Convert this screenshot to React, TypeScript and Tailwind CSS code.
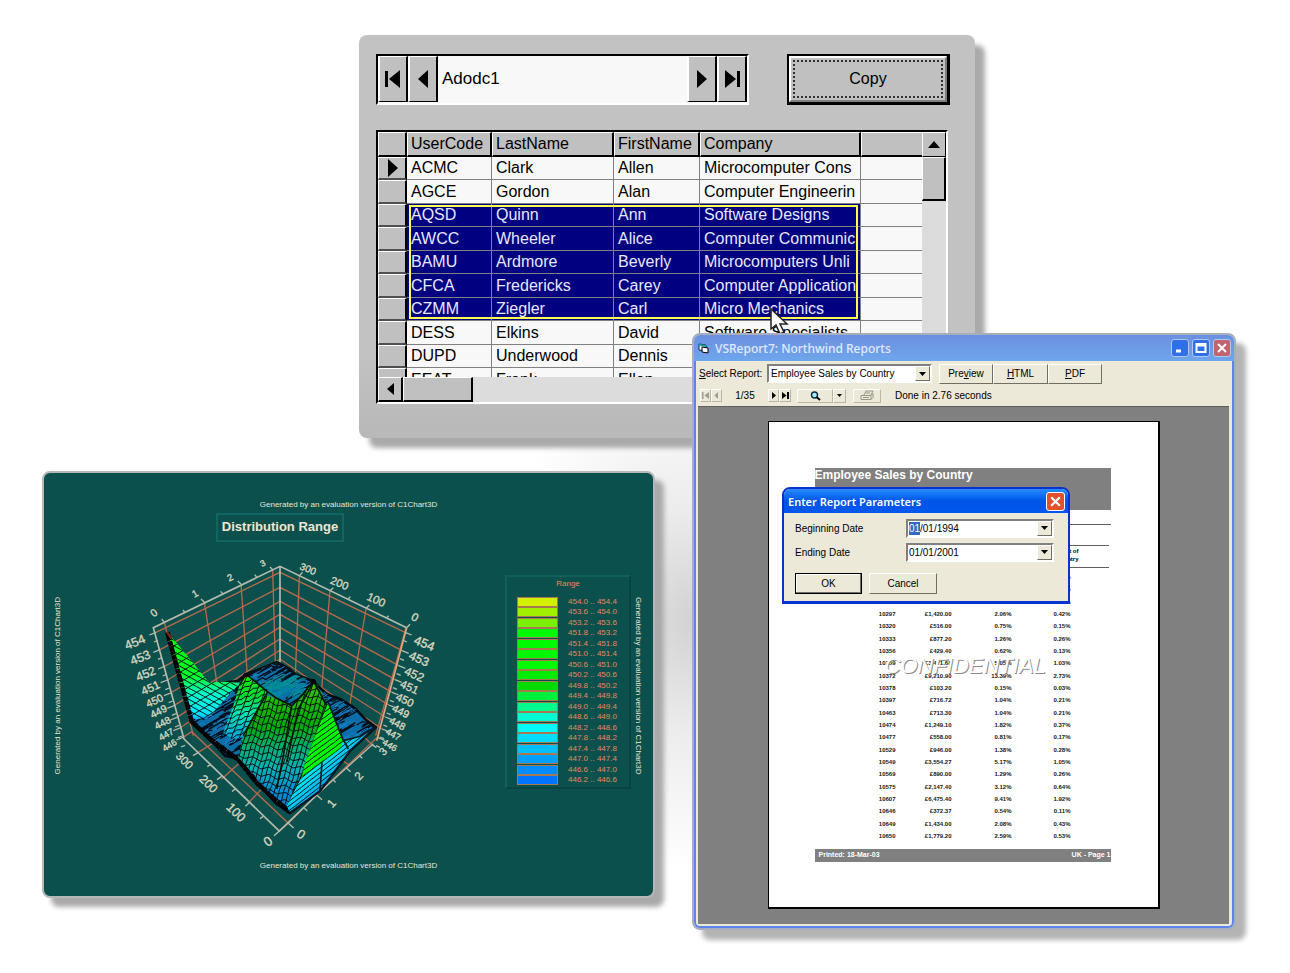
import type { ReactNode } from 'react'
import { useState } from 'react'

const RAISED = 'bg-[#c0c0c0] border border-t-white border-l-white border-r-black border-b-black'
const XP_BUTTON =
  'bg-[#ece9d8] border border-t-white border-l-white border-r-[#716f64] border-b-[#716f64]'
const GENERATED = 'Generated by an evaluation version of C1Chart3D'

const CUSTOMERS = [
  ['ACMC', 'Clark', 'Allen', 'Microcomputer Cons'],
  ['AGCE', 'Gordon', 'Alan', 'Computer Engineerin'],
  ['AQSD', 'Quinn', 'Ann', 'Software Designs'],
  ['AWCC', 'Wheeler', 'Alice', 'Computer Communic'],
  ['BAMU', 'Ardmore', 'Beverly', 'Microcomputers Unli'],
  ['CFCA', 'Fredericks', 'Carey', 'Computer Application'],
  ['CZMM', 'Ziegler', 'Carl', 'Micro Mechanics'],
  ['DESS', 'Elkins', 'David', 'Software Specialists'],
  ['DUPD', 'Underwood', 'Dennis', ''],
  ['EEAT', 'Frank', 'Ellen', ''],
]

const LEGEND = [
  ['#d2f000', '454.0', '454.4'],
  ['#a0f000', '453.6', '454.0'],
  ['#78f000', '453.2', '453.6'],
  ['#00fa00', '451.8', '453.2'],
  ['#00fa00', '451.4', '451.8'],
  ['#00f500', '451.0', '451.4'],
  ['#00fa00', '450.6', '451.0'],
  ['#00eb00', '450.2', '450.6'],
  ['#00dc00', '449.8', '450.2'],
  ['#00f03c', '449.4', '449.8'],
  ['#00fa8c', '449.0', '449.4'],
  ['#00fad2', '448.6', '449.0'],
  ['#00fafa', '448.2', '448.6'],
  ['#00dcff', '447.8', '448.2'],
  ['#00beff', '447.4', '447.8'],
  ['#00a0ff', '447.0', '447.4'],
  ['#008cff', '446.6', '447.0'],
  ['#0073ff', '446.2', '446.6'],
]

const SALES = [
  ['', '', '', '%'],
  ['', '', '', '%'],
  ['', '', '', '%'],
  ['10297', '£1,420.00', '2.06%', '0.42%'],
  ['10320', '£516.00', '0.75%', '0.15%'],
  ['10333', '£877.20', '1.26%', '0.26%'],
  ['10356', '£429.40', '0.62%', '0.13%'],
  ['10359', '£3,471.68', '5.05%', '1.03%'],
  ['10372', '£9,210.90', '13.39%', '2.73%'],
  ['10378', '£103.20', '0.15%', '0.03%'],
  ['10397', '£716.72', '1.04%', '0.21%'],
  ['10463', '£713.30', '1.04%', '0.21%'],
  ['10474', '£1,249.10', '1.82%', '0.37%'],
  ['10477', '£558.00', '0.81%', '0.17%'],
  ['10529', '£946.00', '1.38%', '0.28%'],
  ['10549', '£3,554.27', '5.17%', '1.05%'],
  ['10569', '£890.00', '1.29%', '0.26%'],
  ['10575', '£2,147.40', '3.12%', '0.64%'],
  ['10607', '£6,475.40', '9.41%', '1.92%'],
  ['10646', '£372.37', '0.54%', '0.11%'],
  ['10649', '£1,434.00', '2.08%', '0.43%'],
  ['10650', '£1,779.20', '2.59%', '0.53%'],
]

function Arrow({ dir, bar }: { dir: 'left' | 'right'; bar?: boolean }) {
  return (
    <svg viewBox="0 0 20 20" className="h-5 w-5" aria-hidden="true">
      {dir === 'left' ? (
        <>
          {bar && <rect x="2" y="2" width="3" height="16" />}
          <path d={bar ? 'M17 1v18L6 10z' : 'M15 1v18L5 10z'} />
        </>
      ) : (
        <>
          {bar && <rect x="15" y="2" width="3" height="16" />}
          <path d={bar ? 'M3 1v18l11-9z' : 'M5 1v18l10-9z'} />
        </>
      )}
    </svg>
  )
}

function NavButton({ label, dir, bar }: { label: string; dir: 'left' | 'right'; bar?: boolean }) {
  return (
    <button
      aria-label={label}
      className="flex w-[30px] items-center justify-center border-t border-r-2 border-b border-l-2 border-t-white border-l-white border-r-black border-b-black bg-[#c0c0c0]"
    >
      <Arrow dir={dir} bar={bar} />
    </button>
  )
}

function DataGrid() {
  return (
    <div className="relative mt-[25px] h-[274px] w-[572px] border-2 border-t-black border-l-black border-r-white border-b-white">
      <div className="flex h-[245px]">
        <div className="relative h-full w-[544px] overflow-hidden bg-[#f8f8f8]">
          <table className="w-[544px] table-fixed border-separate border-spacing-0 text-left text-[16px] leading-[20px]">
            <colgroup>
              <col className="w-[29px]" />
              <col className="w-[85px]" />
              <col className="w-[122px]" />
              <col className="w-[86px]" />
              <col className="w-[161px]" />
              <col className="w-[61px]" />
            </colgroup>
            <thead>
              <tr className="h-[25px]">
                {['', 'UserCode', 'LastName', 'FirstName', 'Company', ''].map((name, i) => (
                  <th
                    key={i}
                    className="overflow-hidden border-t border-r-2 border-b-2 border-l border-t-white border-l-white border-r-black border-b-black bg-[#c0c0c0] pl-[3px] font-normal whitespace-nowrap last:border-r-0"
                  >
                    {name}
                  </th>
                ))}
              </tr>
            </thead>
            <tbody>
              {CUSTOMERS.map((row, i) => (
                <tr
                  key={row[0]}
                  className={`odd:h-[23px] even:h-[24px] ${
                    i > 1 && i < 7 ? 'bg-[#000080] text-[#e8e8ff]' : 'text-black'
                  }`}
                >
                  <td className="border-t border-r-2 border-b-2 border-l border-t-white border-l-white border-r-black border-b-[#505050] bg-[#c0c0c0] p-0">
                    {i === 0 && (
                      <svg viewBox="0 0 10 18" className="ml-[9px] h-[18px] w-[10px]" aria-hidden="true">
                        <path d="M0 0v18l10-9z" />
                      </svg>
                    )}
                  </td>
                  {row.map((cell, j) => (
                    <td
                      key={j}
                      className="overflow-hidden border-r border-b border-[#808080] py-0 pl-[4px] whitespace-nowrap"
                    >
                      {cell}
                    </td>
                  ))}
                  <td className="border-b border-[#808080] bg-[#f8f8f8] p-0" />
                </tr>
              ))}
            </tbody>
          </table>
          <div className="absolute top-[73px] left-[31px] h-[114px] w-[449px] border-2 border-[#ffff50]" />
        </div>
        <div className="flex w-[24px] flex-col bg-[#dcdcdc]">
          <button aria-label="Scroll up" className={`flex h-[25px] items-center justify-center ${RAISED}`}>
            <svg viewBox="0 0 12 7" className="h-[7px] w-[12px]" aria-hidden="true">
              <path d="M0 7h12L6 0z" />
            </svg>
          </button>
          <div className="h-[44px] border-t border-r-2 border-b-2 border-l border-t-white border-l-white border-r-black border-b-black bg-[#c0c0c0]" />
        </div>
      </div>
      <div className="flex h-[25px] bg-[#dcdcdc]">
        <button
          aria-label="Scroll left"
          className="flex w-[25px] items-center justify-center border-t border-r-2 border-b-2 border-l border-t-white border-l-white border-r-black border-b-black bg-[#c0c0c0]"
        >
          <svg viewBox="0 0 7 12" className="h-[12px] w-[7px]" aria-hidden="true">
            <path d="M7 0v12L0 6z" />
          </svg>
        </button>
        <div className="w-[70px] border-t border-r-2 border-b-2 border-l border-t-white border-l-white border-r-black border-b-black bg-[#c0c0c0]" />
      </div>
    </div>
  )
}

function CustomerWindow() {
  return (
    <section className="absolute top-[35px] left-[359px] h-[403px] w-[616px] rounded-lg bg-linear-to-b from-[#c2c2c2] from-80% to-[#b8b8b8] px-[17px] pt-[19px] shadow-[10px_10px_5px_#aaaaaa]">
      <div className="flex w-[574px] justify-between">
        <div className="flex h-[51px] w-[373px] border-2 border-t-black border-l-black border-r-white border-b-white bg-[#f8f8f8] pb-px">
          <div className="flex flex-1">
            <NavButton label="First record" dir="left" bar />
            <NavButton label="Previous record" dir="left" />
            <input
              aria-label="Record source"
              defaultValue="Adodc1"
              className="min-w-0 flex-1 bg-[#f8f8f8] px-[4px] text-[17px] leading-[20px] outline-none"
            />
            <NavButton label="Next record" dir="right" />
            <NavButton label="Last record" dir="right" bar />
          </div>
        </div>
        <button className="flex h-[51px] w-[163px] border-2 border-r-3 border-b-3 border-black bg-[#c0c0c0]">
          <span className="flex h-full w-full border-2 border-t-white border-l-white border-r-[#808080] border-b-[#808080] p-[2px]">
            <span className="flex flex-1 items-center justify-center border-2 border-dotted border-[#303030] text-[16px] leading-[20px]">
              Copy
            </span>
          </span>
        </button>
      </div>
      <DataGrid />
      <svg viewBox="0 0 20 28" className="absolute top-[273px] left-[411px] h-[28px] w-[20px]" aria-hidden="true">
        <path d="M1 1v20l5-4 4 9 4-2-4-8h7z" fill="#fff" stroke="#222" strokeWidth="1.5" />
      </svg>
    </section>
  )
}

// cheap deterministic noise, so the surface looks the same on every render
function noise(n: number) {
  const v = Math.sin(n * 127.1) * 43758.5453
  return v - Math.floor(v)
}

function Hatch({ clip, count, box, dx, dy, color, width }: {
  clip: string
  count: number
  box: [number, number, number, number]
  dx: number
  dy: number
  color: string
  width: number
}) {
  let d = ''
  for (let i = 0; i < count; i++) {
    const x = box[0] + noise(i + count) * box[2]
    const y = box[1] + noise(i * 3 + 7) * box[3]
    const k = 0.5 + noise(i + 31)
    d += `M${Math.round(x)} ${Math.round(y)}l${Math.round(dx * k)} ${Math.round(dy * k)}l${Math.round(dx * 0.3)} ${Math.round(noise(i) * 14 - 7)}`
  }
  return <path d={d} clipPath={`url(#${clip})`} fill="none" stroke={color} strokeWidth={width} />
}

function Mesh({ clip, box, dx, dy, step, wave = 0 }: {
  clip: string
  box: [number, number, number, number]
  dx: number
  dy: number
  step: number
  wave?: number
}) {
  const [x, y, w, h] = box
  const steep = Math.abs(dy) > Math.abs(dx)
  let d = ''
  for (let s = -300; s < (steep ? w : h) + 300; s += step) {
    d += steep ? `M${x + s} ${y}` : `M${x} ${y + s}`
    const parts = 12
    for (let p = 1; p <= parts; p++) {
      const jig = wave * (p % 2 ? 1 : -1)
      const len = steep ? h / dy : w / dx
      const px = (steep ? x + s : x) + (dx * len * p) / parts
      const py = (steep ? y : y + s) + (dy * len * p) / parts
      d += `L${Math.round(px + (steep ? jig : 0))} ${Math.round(py + (steep ? 0 : jig))}`
    }
  }
  return <path d={d} clipPath={`url(#${clip})`} fill="none" stroke="#001418" strokeWidth="3" />
}

const FACETS = {
  base: 'M240 515L262 470L300 405L385 396L408 376L470 352L500 340L530 355L560 378L608 395L650 436L690 450L735 478L770 515L797 535L720 605L630 725L540 792L500 765L440 700L385 630L345 620L300 570z',
  spike: 'M172 250L190 270L240 330L296 400L345 398L390 402L345 450L300 500L245 517L222 450L198 350z',
  hill: 'M408 375L440 400L472 428L440 480L400 565L365 570L340 550L370 470L388 410z',
  ridge: 'M470 440L500 448L545 470L575 440L610 395L635 432L650 470L600 600L575 680L530 770L480 730L385 625L400 560L440 480z',
  crest: 'M655 460L675 510L700 572L690 600L575 684L585 640L615 560z',
  slope: 'M575 684L700 572L750 560L795 535L720 605L630 725L540 790L530 770z',
}

const LEFT_AXIS = [[138, 250], [150, 302], [164, 352], [172, 393], [182, 432], [192, 470], [201, 505], [210, 537], [219, 565]]
const BACK_AXIS = [70, 115, 157, 196, 235, 270, 303, 330]
const RIGHT_AXIS = [[885, 250], [876, 305], [866, 350], [855, 392], [846, 430], [836, 468], [826, 504], [816, 540], [804, 566]]

const AXIS_LABELS: [string, number, number, number, number][] = [
  ['454', 76, 292, -22, 38], ['453', 92, 338, -22, 37], ['452', 108, 386, -22, 36],
  ['451', 122, 428, -24, 34], ['450', 134, 466, -25, 32], ['449', 146, 498, -27, 31],
  ['448', 158, 532, -28, 30], ['447', 168, 566, -30, 28], ['446', 178, 598, -32, 27],
  ['454', 942, 296, 22, 38], ['453', 926, 342, 24, 37], ['452', 912, 388, 24, 36],
  ['451', 898, 426, 24, 34], ['450', 884, 464, 25, 33], ['449', 872, 498, 26, 32],
  ['448', 862, 534, 28, 30], ['447', 850, 566, 28, 28], ['446', 840, 598, 30, 27],
  ['0', 132, 202, -35, 32], ['1', 255, 144, -30, 30], ['2', 360, 96, -28, 29], ['3', 458, 52, -28, 26],
  ['300', 594, 70, 22, 30], ['200', 688, 114, 22, 33], ['100', 798, 164, 24, 34], ['0', 914, 216, 30, 34],
  ['300', 222, 646, 44, 34], ['200', 294, 716, 44, 36], ['100', 376, 802, 45, 38], ['0', 476, 890, -35, 40],
  ['0', 572, 868, 35, 38], ['1', 666, 774, -48, 36], ['2', 748, 692, -48, 35], ['3', 820, 618, -48, 33],
]

function SurfaceChart() {
  return (
    <svg viewBox="0 0 1020 930" className="mt-[7px] h-[310px] w-[340px]" role="img" aria-label="Distribution Range">
      <defs>
        {Object.entries(FACETS).map(([name, d]) => (
          <clipPath key={name} id={name}>
            <path d={d} />
          </clipPath>
        ))}
        <linearGradient id="spikeFill" x1="0" x2="0" y1="250" y2="520" gradientUnits="userSpaceOnUse">
          <stop offset="0" stopColor="#00ff00" />
          <stop offset=".48" stopColor="#00ff28" />
          <stop offset=".68" stopColor="#00fac8" />
          <stop offset=".9" stopColor="#00e6ff" />
          <stop offset="1" stopColor="#008cf0" />
        </linearGradient>
        <linearGradient id="hillFill" x1="0" x2="0" y1="375" y2="570" gradientUnits="userSpaceOnUse">
          <stop offset="0" stopColor="#14f000" />
          <stop offset=".35" stopColor="#00dc32" />
          <stop offset=".6" stopColor="#00e6b4" />
          <stop offset="1" stopColor="#00a0dc" />
        </linearGradient>
        <linearGradient id="ridgeFill" x1="0" x2="0" y1="390" y2="780" gradientUnits="userSpaceOnUse">
          <stop offset="0" stopColor="#3cc800" />
          <stop offset=".35" stopColor="#00aa00" />
          <stop offset=".52" stopColor="#00af6e" />
          <stop offset=".68" stopColor="#00b4b4" />
          <stop offset=".85" stopColor="#0090d2" />
          <stop offset="1" stopColor="#0078d7" />
        </linearGradient>
        <linearGradient id="slopeFill" x1="600" x2="690" y1="610" y2="700" gradientUnits="userSpaceOnUse">
          <stop offset="0" stopColor="#00f078" />
          <stop offset=".3" stopColor="#00ebf0" />
          <stop offset=".65" stopColor="#00bef5" />
          <stop offset="1" stopColor="#0078ff" />
        </linearGradient>
      </defs>

      <g stroke="#b56a4c" strokeWidth="4" fill="none">
        {BACK_AXIS.map((y, i) => (
          <path key={y} d={`M${LEFT_AXIS[i][0]} ${LEFT_AXIS[i][1]}L510 ${y}L${RIGHT_AXIS[i][0]} ${RIGHT_AXIS[i][1]}`} />
        ))}
        <path d="M163 220L250 560M283 160L322 410M393 105L412 380M488 60L496 345M568 80L556 380M660 125L635 420M768 180L717 480M888 236L797 560" />
        <path d="M219 565L245 548L535 823L508 846M265 610L305 585M335 690L385 645M412 765L460 715M535 823L620 738L800 566M720 650L690 630M785 585L740 545" />
      </g>
      <g stroke="#b4bcae" strokeWidth="5" fill="none">
        <path d="M222 570L130 236L510 52L890 236M510 52V340M222 570L508 846L620 738" />
        <path d="M890 236L800 575" stroke="#dca882" />
        <path d="M630 728L790 584" strokeWidth="4" />
        {LEFT_AXIS.map(([x, y]) => <path key={y} strokeWidth="4" d={`M${x} ${y}l-20 8M${x + 6} ${y + 24}l-12 5`} />)}
        {RIGHT_AXIS.map(([x, y]) => <path key={y} strokeWidth="4" d={`M${x} ${y}l20 8M${x - 6} ${y + 24}l12 5`} />)}
        <path
          strokeWidth="4"
          d="M163 220l-8-10M225 190l-6-7M283 160l-10-10M338 134l-6-7M393 105l-10-9M440 84l-6-7M488 62l-8-8M568 80l10-10M615 102l6-7M660 125l10-9M715 150l6-7M768 178l10-9M830 206l6-6M890 236l10-10"
        />
        <path
          strokeWidth="4"
          d="M265 610l-16 10M302 646l-10 7M335 682l-14 10M376 720l-10 7M420 760l-14 12M460 802l-10 7M508 846l-16 14M535 823l16 14M583 778l9 8M620 738l16 14M668 692l9 8M708 656l14 12M748 620l9 8M785 586l14 10"
        />
      </g>

      <path d={FACETS.base} fill="#0c6ea8" stroke="#000c12" strokeWidth="8" strokeLinejoin="round" />
      <Hatch clip="base" count={620} box={[200, 340, 600, 460]} dx={34} dy={-20} color="#000f1c" width={4} />
      <Hatch clip="base" count={160} box={[230, 350, 560, 300]} dx={26} dy={-16} color="#1482c8" width={3} />
      <Hatch clip="base" count={50} box={[440, 395, 110, 60]} dx={26} dy={-14} color="#008c96" width={4} />
      <Hatch clip="base" count={45} box={[340, 480, 130, 130]} dx={20} dy={-30} color="#0a8cd2" width={3} />

      <path d={FACETS.spike} fill="url(#spikeFill)" />
      <Mesh clip="spike" box={[160, 250, 240, 270]} dx={40} dy={22} step={17} />
      <Mesh clip="spike" box={[160, 250, 240, 270]} dx={20} dy={-12} step={30} />
      <path d="M172 250L245 517L300 570L385 632L440 702L540 790" fill="none" stroke="#000" strokeWidth="14" strokeDasharray="26 2 14 1" />
      <path d="M170 248l14 20" stroke="#7d2814" strokeWidth="7" />

      <path d={FACETS.hill} fill="url(#hillFill)" />
      <Mesh clip="hill" box={[330, 370, 150, 200]} dx={30} dy={-12} step={15} wave={2} />
      <Mesh clip="hill" box={[330, 370, 150, 200]} dx={-9} dy={24} step={24} />

      <path d={FACETS.ridge} fill="url(#ridgeFill)" />
      <Mesh clip="ridge" box={[380, 390, 290, 400]} dx={-8} dy={26} step={14} wave={1} />
      <Mesh clip="ridge" box={[380, 390, 290, 400]} dx={40} dy={8} step={22} wave={5} />
      <path
        d="M388 410L408 375L472 428L500 448L545 470L575 440L610 395L650 470M472 430L400 560M545 470L520 620L500 720M610 400L565 480L530 640M650 470L575 680L530 775"
        fill="none"
        stroke="#001400"
        strokeWidth="5"
      />

      <path d={FACETS.slope} fill="url(#slopeFill)" />
      <Mesh clip="slope" box={[530, 530, 270, 260]} dx={30} dy={-23} step={14} />
      <path d={FACETS.crest} fill="#00f500" />
      <Mesh clip="crest" box={[560, 450, 150, 240]} dx={30} dy={-22} step={16} />
      <path d="M630 725L636 640M700 572L715 600M655 460L700 575L750 562L795 535L720 605L630 725L540 790" fill="none" stroke="#001c28" strokeWidth="5" />
      <circle cx="610" cy="398" r="8" />
      <circle cx="408" cy="378" r="7" />

      {AXIS_LABELS.map(([text, x, y, angle, size]) => (
        <text
          key={`${text}-${x}`}
          x={x}
          y={y}
          fontSize={size}
          textAnchor="middle"
          transform={`rotate(${angle} ${x} ${y - 10})`}
          fill="#d8d8c0"
          stroke="#d8d8c0"
          strokeWidth="1"
        >
          {text}
        </text>
      ))}
    </svg>
  )
}

function ChartWindow() {
  return (
    <section className="absolute top-[471px] left-[42px] flex h-[427px] w-[613px] flex-col rounded-lg border-2 border-[#b4b8b6] bg-[#0c504d] pt-[26px] text-[8px] leading-[12px] text-[#e6e6d2] shadow-[9px_9px_5px_#aaaaaa]">
      <p className="text-center">{GENERATED}</p>
      <div className="flex h-[349px] items-center">
        <p className="ml-[8px] w-[12px] rotate-180 whitespace-nowrap [writing-mode:vertical-rl]">{GENERATED}</p>
        <div className="ml-[46px] flex w-[340px] flex-col items-center">
          <h2 className="flex h-[29px] items-center border-2 border-t-[#0f6663] border-r-[#0f6663] border-b-[#0f6663] border-l-[#0f6663] px-[4px] text-[13px] font-bold text-[#f0e6d2]">
            Distribution Range
          </h2>
          <SurfaceChart />
        </div>
        <div className="mb-[8px] ml-[55px] h-[214px] w-[126px] border-2 border-[#0f605d] border-r-[#084441] border-b-[#084441] text-[#e8875c]">
          <h3 className="text-center leading-[14px]">Range</h3>
          <ul className="mt-[6px]">
            {LEGEND.map(([color, from, to]) => (
              <li key={from} className="flex items-center pl-[10px] odd:h-[10px] even:h-[11px]">
                <span className="h-[10px] w-[41px] border border-[#a87850]" style={{ backgroundColor: color }} />
                <span className="ml-[10px] leading-[10px] whitespace-nowrap">
                  {from} .. {to}
                </span>
              </li>
            ))}
          </ul>
        </div>
        <p className="ml-[1px] w-[12px] whitespace-nowrap [writing-mode:vertical-rl]">{GENERATED}</p>
      </div>
      <p className="text-center">{GENERATED}</p>
    </section>
  )
}

function DownArrow() {
  return (
    <svg viewBox="0 0 7 4" className="h-[4px] w-[7px]" aria-hidden="true">
      <path d="M0 0h7L3.5 4z" />
    </svg>
  )
}

function CaptionButton({ label, close, children }: { label: string; close?: boolean; children: ReactNode }) {
  return (
    <button
      aria-label={label}
      className={`flex h-[18px] w-[18px] items-center justify-center rounded-[3px] border border-[#b4c8f5] ${
        close ? 'bg-[#c0646e]' : 'bg-[#2f70e8]'
      }`}
    >
      <svg viewBox="0 0 14 14" className="h-[14px] w-[14px]" fill="none" stroke="#fff" strokeWidth="2" aria-hidden="true">
        {children}
      </svg>
    </button>
  )
}

function DateField({ id, label, first, rest, active }: {
  id: string
  label: string
  first: string
  rest: string
  active?: boolean
}) {
  return (
    <div className="flex h-[24px] items-center">
      <label htmlFor={id} className="w-[111px]">
        {label}
      </label>
      <div className="flex h-[19px] w-[148px] items-center border-2 border-t-[#808080] border-l-[#808080] border-r-white border-b-white bg-white pl-[1px]">
        <input
          id={id}
          defaultValue={first}
          className={`w-[11px] ${active ? 'bg-[#316ac5] text-white' : 'bg-white'}`}
        />
        <input aria-label={`${label}, month and year`} defaultValue={rest} className="min-w-0 flex-1 bg-white" />
        <button aria-label={`Open ${label}`} className={`flex h-[15px] w-[15px] items-center justify-center ${XP_BUTTON}`}>
          <DownArrow />
        </button>
      </div>
    </div>
  )
}

function ParametersDialog() {
  return (
    <div
      role="dialog"
      aria-label="Enter Report Parameters"
      className="absolute top-[152px] left-[88px] h-[117px] w-[288px] rounded-t-lg border-2 border-b-3 border-[#0a32d2] bg-[#ece9d8] text-[10px] leading-[13px]"
    >
      <div className="flex h-[24px] items-center justify-between rounded-t-md bg-linear-to-b from-[#2a8cff] via-[#0054e8] to-[#0058ee] pr-[3px] pl-[4px]">
        <h2 className="font-['Noto_Sans'] text-[11px] font-semibold text-white">Enter Report Parameters</h2>
        <button aria-label="Close" className="flex h-[19px] w-[19px] items-center justify-center rounded-[3px] border border-white bg-[#e4502c]">
          <svg viewBox="0 0 14 14" className="h-[15px] w-[15px]" stroke="#fff" strokeWidth="2" aria-hidden="true">
            <path d="M3 3l8 8M11 3l-8 8" />
          </svg>
        </button>
      </div>
      <div className="pt-[3px] pl-[11px]">
        <DateField id="begin" label="Beginning Date" first="01" rest="/01/1994" active />
        <DateField id="end" label="Ending Date" first="01" rest="/01/2001" />
        <div className="mt-[9px] flex gap-[7px]">
          <button className="h-[21px] w-[67px] border border-black bg-[#ece9d8] shadow-[inset_-1px_-1px_#716f64,inset_1px_1px_#fff]">
            OK
          </button>
          <button className={`h-[21px] w-[68px] ${XP_BUTTON}`}>Cancel</button>
        </div>
      </div>
    </div>
  )
}

function ReportPage() {
  return (
    <div className="relative mx-auto h-[488px] w-[392px] border border-r-2 border-b-2 border-black bg-white pt-[46px] pr-[47px] pl-[46px]">
      <h2 className="h-[42px] bg-[#808080] text-[12px] leading-[15px] font-bold text-white">Employee Sales by Country</h2>
      <div className="mt-[14px] border-t border-[#606060]" />
      <div className="mt-[20px] mr-[2px] h-[23px] border-y border-[#606060] pt-[1px]">
        <p className="ml-auto w-[64px] pr-[30px] text-right text-[6px] leading-[8px] font-bold whitespace-nowrap">
          Percent of
          <br />
          Country
        </p>
      </div>
      <table className="mt-[3px] w-full table-fixed border-separate border-spacing-0 text-right text-[6px] leading-[12px] font-semibold text-[#181818]">
        <colgroup>
          <col className="w-[81px]" />
          <col className="w-[56px]" />
          <col className="w-[60px]" />
          <col className="w-[59px]" />
          <col />
        </colgroup>
        <tbody>
          {SALES.map((row, i) => (
            <tr key={i} className="h-[12px] nth-[3n]:h-[13px]">
              {row.map((cell, j) => (
                <td key={j} className="p-0">
                  {cell}
                </td>
              ))}
              <td className="p-0" />
            </tr>
          ))}
        </tbody>
      </table>
      <div className="mt-[7px] flex h-[13px] justify-between bg-[#808080] pl-[4px] text-[7px] leading-[11px] font-bold text-white">
        <span>Printed: 18-Mar-03</span>
        <span>UK - Page 1</span>
      </div>
      <p className="absolute top-[231px] left-[116px] text-[22px] leading-[26px] text-white italic [text-shadow:1px_1px_#8c8c8c]">
        CONFIDENTIAL
      </p>
    </div>
  )
}

function ReportToolbar() {
  const [report, setReport] = useState('Employee Sales by Country')
  return (
    <>
      <div className="flex h-[25px] items-center pl-[3px]">
        <label htmlFor="report" className="w-[68px] whitespace-nowrap">
          <u>S</u>elect Report:
        </label>
        <div className="relative h-[19px] w-[165px] border-2 border-t-[#808080] border-l-[#808080] border-r-white border-b-white bg-white">
          <select
            id="report"
            value={report}
            onChange={e => setReport(e.target.value)}
            className="block h-[15px] w-full appearance-none bg-white pl-[2px] outline-none"
          >
            <option>Employee Sales by Country</option>
          </select>
          <span className={`pointer-events-none absolute top-0 right-0 flex h-[15px] w-[15px] items-center justify-center ${XP_BUTTON}`}>
            <DownArrow />
          </span>
        </div>
        <div className="ml-[7px] flex">
          <button className={`h-[20px] w-[54px] ${XP_BUTTON}`}>
            Pre<u>v</u>iew
          </button>
          <button className={`h-[20px] w-[55px] ${XP_BUTTON}`}>
            <u>H</u>TML
          </button>
          <button className={`h-[20px] w-[54px] ${XP_BUTTON}`}>
            <u>P</u>DF
          </button>
        </div>
      </div>
      <div className="flex h-[20px] items-center pb-px pl-[4px]">
        <button aria-label="First page" className="flex h-[13px] w-[11px] items-center justify-center border border-t-white border-r-[#bab6a4] border-b-[#bab6a4] border-l-white">
          <svg viewBox="0 0 7 7" className="h-[7px] w-[7px]" fill="#a09d90" aria-hidden="true">
            <path d="M0 0h1.5v7H0zM7 0v7L2.5 3.5z" />
          </svg>
        </button>
        <button aria-label="Previous page" className="flex h-[13px] w-[11px] items-center justify-center border border-t-white border-r-[#bab6a4] border-b-[#bab6a4] border-l-white">
          <svg viewBox="0 0 7 7" className="h-[7px] w-[7px]" fill="#a09d90" aria-hidden="true">
            <path d="M5 0v7L1.5 3.5z" />
          </svg>
        </button>
        <span className="w-[46px] text-center">1/35</span>
        <button aria-label="Next page" className="flex h-[13px] w-[11px] items-center justify-center border border-t-white border-r-[#bab6a4] border-b-[#bab6a4] border-l-white">
          <svg viewBox="0 0 7 7" className="h-[7px] w-[7px]" aria-hidden="true">
            <path d="M2 0v7l4-3.5z" />
          </svg>
        </button>
        <button aria-label="Last page" className="flex h-[13px] w-[12px] items-center justify-center border border-t-white border-r-[#bab6a4] border-b-[#bab6a4] border-l-white">
          <svg viewBox="0 0 7 7" className="h-[7px] w-[7px]" aria-hidden="true">
            <path d="M0 0v7l4.5-3.5zM5 0h2v7H5z" />
          </svg>
        </button>
        <button aria-label="Zoom" className="ml-[6px] flex h-[14px] w-[36px] items-center justify-center border border-t-white border-r-[#bab6a4] border-b-[#bab6a4] border-l-white">
          <svg viewBox="0 0 11 10" className="h-[10px] w-[11px]" aria-hidden="true">
            <circle cx="4.5" cy="4" r="3" fill="#a0f0ff" stroke="#102840" strokeWidth="1.4" />
            <path d="M6.500 6l3.500 3" stroke="#000" strokeWidth="2" />
          </svg>
        </button>
        <button aria-label="Zoom levels" className="flex h-[14px] w-[13px] items-center justify-center border border-t-white border-r-[#bab6a4] border-b-[#bab6a4] border-l-white">
          <svg viewBox="0 0 5 3" className="h-[3px] w-[5px]" aria-hidden="true">
            <path d="M0 0h5L2.500 3z" />
          </svg>
        </button>
        <button aria-label="Print" className="ml-[7px] flex h-[14px] w-[28px] items-center justify-center border border-t-white border-r-[#bab6a4] border-b-[#bab6a4] border-l-white">
          <svg viewBox="0 0 14 11" className="h-[11px] w-[14px]" fill="none" stroke="#98958a" aria-hidden="true">
            <path d="M4 5l2-4h7l-2 4M1 5.500h10v4H1zM11 5.500l2-2v4l-2 2M3 7.500h6M6 3h4" />
          </svg>
        </button>
        <span className="ml-[14px]">Done in 2.76 seconds</span>
      </div>
    </>
  )
}

function ReportWindow() {
  return (
    <section className="absolute top-[333px] left-[692px] h-[597px] w-[544px] rounded-lg border-2 border-[#a8aec0] bg-[#ece9d8] text-[10px] leading-[13px] shadow-[10px_10px_5px_#b4b4b4]">
      <div className="flex h-[26px] items-center rounded-t-md bg-linear-to-b from-[#6c90e0] to-[#6ea6ec] pr-[3px] pl-[4px]">
        <svg viewBox="0 0 11 11" className="h-[11px] w-[11px]" aria-hidden="true">
          <path d="M1 1l7 1v6L1 7z" fill="#fff" stroke="#102840" />
          <path d="M1 1l7 1v2L1 3z" fill="#20a0a8" />
          <path d="M4 4l6 1v5L4 9z" fill="#fff" stroke="#000" />
        </svg>
        <h1 className="ml-[6px] flex-1 font-['Noto_Sans'] text-[12px] font-medium text-[#e0eaff]">
          VSReport7: Northwind Reports
        </h1>
        <div className="flex gap-[3px]">
          <CaptionButton label="Minimize">
            <path d="M3 10h5" strokeWidth="3" />
          </CaptionButton>
          <CaptionButton label="Maximize">
            <path d="M2.500 3h9v8h-9zM2.500 4.500h9" />
          </CaptionButton>
          <CaptionButton label="Close" close>
            <path d="M3 3l8 8M11 3l-8 8" />
          </CaptionButton>
        </div>
      </div>
      <div className="h-[567px] rounded-b-md border-x-2 border-b-2 border-[#5c84ee]">
        <ReportToolbar />
        <div className="mr-[3px] ml-[2px] h-[518px] border-t border-[#606060] bg-[#808080] pt-[14px]">
          <ReportPage />
        </div>
      </div>
      <ParametersDialog />
    </section>
  )
}

export default function App() {
  return (
    <main className="relative min-h-screen w-full overflow-hidden bg-white bg-[radial-gradient(ellipse_240px_280px_at_700px_620px,#d0d0d0_0%,#ececec_40%,#ffffff_90%)] font-['Liberation_Sans',Arial,sans-serif] text-black">
      <CustomerWindow />
      <ChartWindow />
      <ReportWindow />
    </main>
  )
}
